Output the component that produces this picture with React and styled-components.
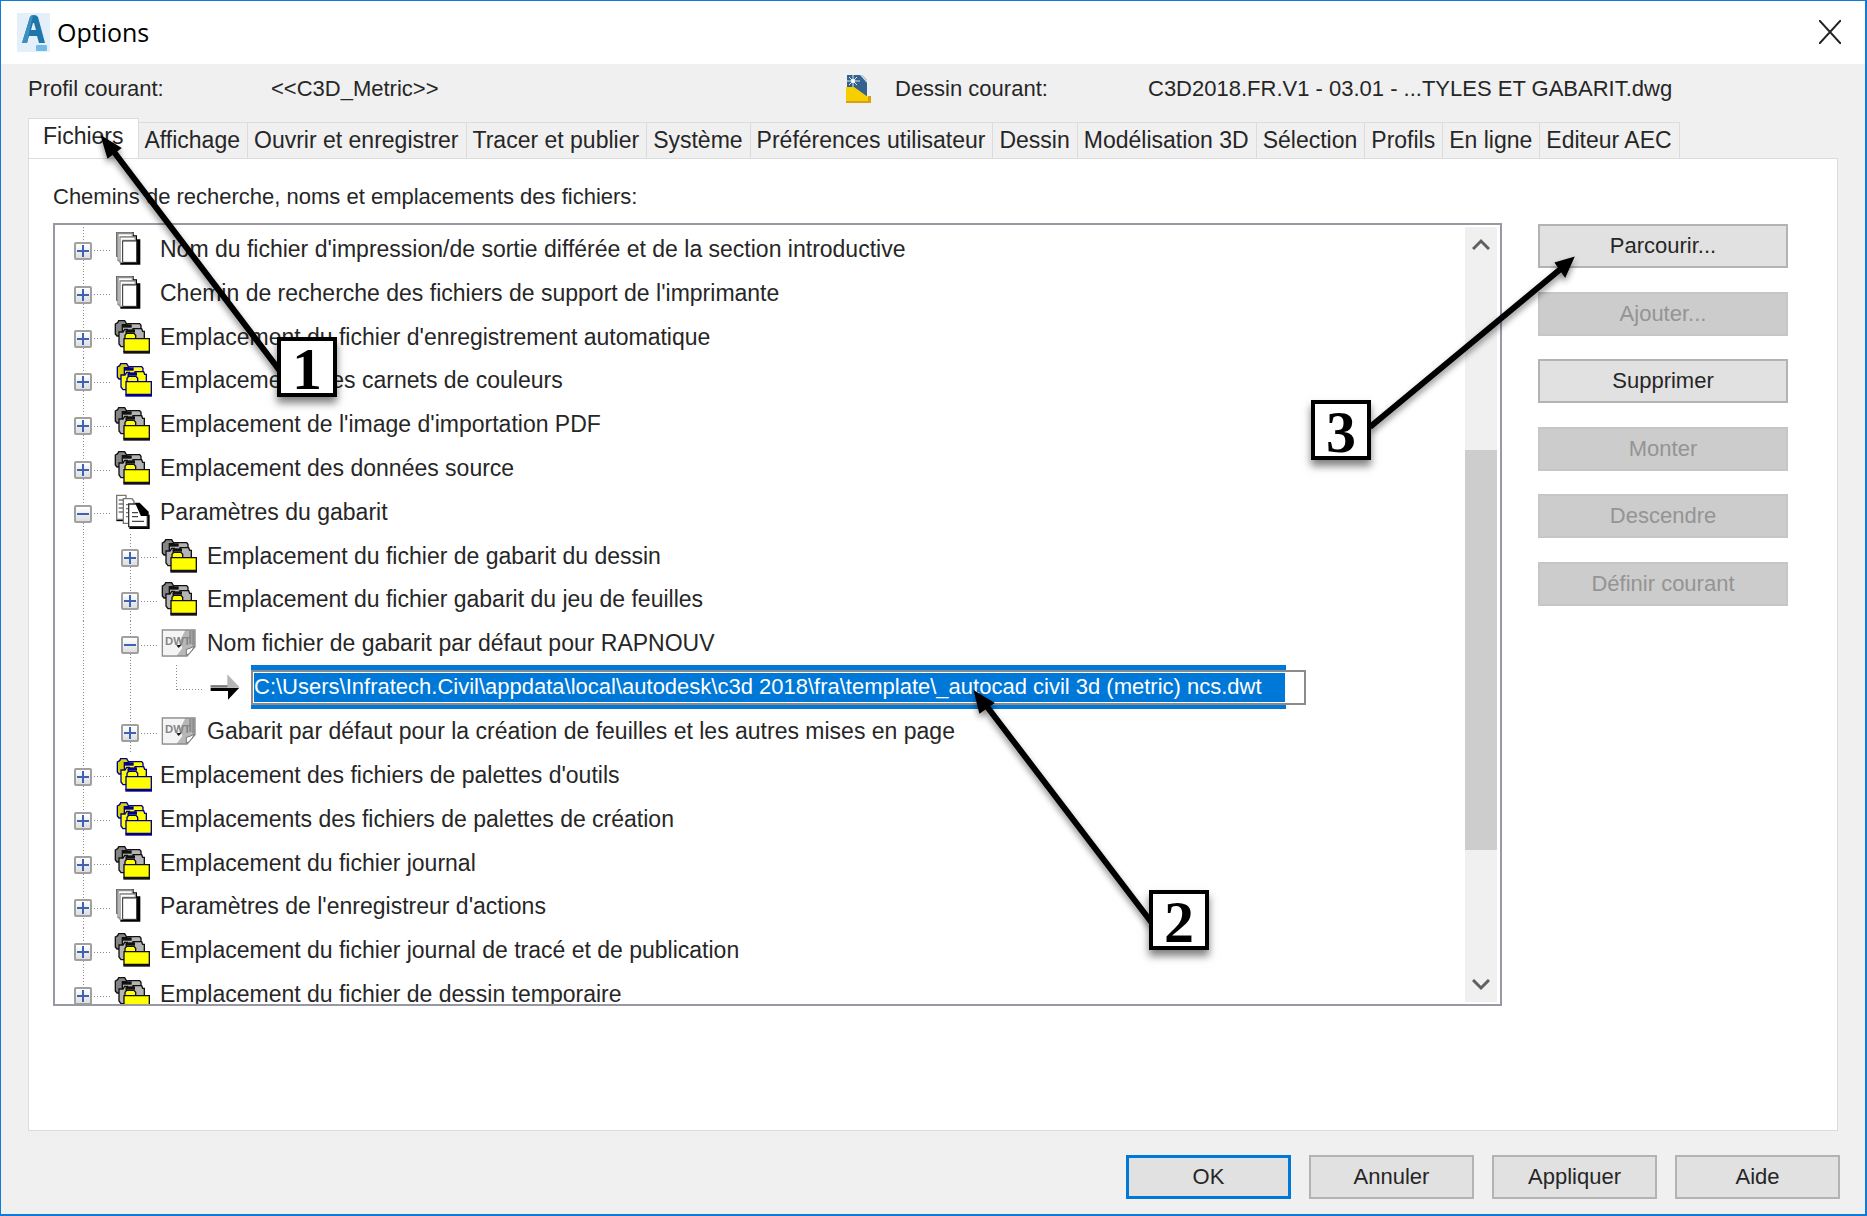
import React from 'react';
import styled, { createGlobalStyle } from 'styled-components';

const GlobalStyle = createGlobalStyle`
  *, *::before, *::after { box-sizing: border-box; }
  body { margin: 0; background: #f0f0f0; }
  button, input { font: inherit; }
`;

const Dialog = styled.main`
  position: relative;
  display: flex;
  flex-direction: column;
  min-height: 100vh;
  border: 1px solid #0f7ad8;
  border-bottom-width: 2px;
  border-right-width: 2px;
  background: #f0f0f0;
  color: #262626;
  font-family: "Liberation Sans", Arial, sans-serif;
  font-size: 22px;
  line-height: 26px;
`;

const TitleBar = styled.header`
  display: flex;
  align-items: center;
  height: 63px;
  padding: 0 24px 2px 16px;
  background: #fff;
`;

const Title = styled.h1`
  flex: 1;
  margin: 0 0 0 6px;
  color: #000;
  font: 400 25px/34px "Open Sans", "Noto Sans", sans-serif;
`;

const CloseButton = styled.button`
  display: flex;
  padding: 0;
  border: 0;
  background: none;
`;

const Profile = styled.section`
  display: grid;
  grid-template-columns: 243px 574px 50px 253px 1fr;
  align-items: center;
  height: 54px;
  padding: 0 27px 4px;
  white-space: nowrap;
`;

const Tabs = styled.nav`
  display: flex;
  align-items: flex-end;
  height: 40px;
  padding-left: 27px;
  font-size: 23px;
`;

const Tab = styled.button`
  height: ${p => (p.$active ? 41 : 36)}px;
  margin-bottom: ${p => (p.$active ? -1 : 0)}px;
  padding: ${p => (p.$active ? '0 14px 7px' : '0 7px 2px 6px')};
  border: 1px solid #dcdcdc;
  border-left-width: ${p => (p.$active ? 1 : 0)}px;
  border-bottom-width: 0;
  background: ${p => (p.$active ? '#fff' : '#f0f0f0')};
  color: inherit;
  white-space: nowrap;
`;

const Panel = styled.section`
  flex: 1;
  margin: 0 27px;
  padding: 25px 49px 0 24px;
  border: 1px solid #dcdcdc;
  background: #fff;
`;

const Caption = styled.h2`
  margin: 0 0 13px;
  font-size: 22px;
  font-weight: 400;
  line-height: 26px;
`;

const Columns = styled.div`
  display: flex;
  align-items: flex-start;
  gap: 36px;
`;

const TreeBox = styled.div`
  flex: 1;
  display: flex;
  height: 783px;
  padding: 2px 3px 2px 0;
  border: 2px solid #979aa4;
  overflow: hidden;
`;

const Tree = styled.ul`
  flex: 1;
  display: grid;
  grid-template-rows: repeat(18, 1fr);
  height: 789px;
  margin: 0;
  padding: 0 0 0 19px;
  font-size: 23px;
  list-style: none;
`;

const dots = '#8a8a8a 0 1px, transparent 1px 3px';

const Row = styled.li`
  display: flex;
  align-items: center;
  padding-left: ${p => p.$level * 47}px;
  white-space: nowrap;
  background:
    repeating-linear-gradient(to bottom, ${dots}) ${p => (p.$level === 2 ? 102 : 9)}px 0 / 1px ${p => (p.$level === 2 ? '25px' : '100%')} no-repeat,
    repeating-linear-gradient(to bottom, ${dots}) ${p => (p.$level > 0 ? 56 : 9)}px 0 / 1px 100% no-repeat,
    repeating-linear-gradient(to bottom, ${dots}) 9px 0 / 1px 100% no-repeat;
`;

const Expander = styled.button`
  display: flex;
  width: 18px;
  height: 18px;
  margin-top: 4px;
  padding: 0;
  border: 2px solid #a0a0a0;
  border-radius: 2px;
  background: linear-gradient(#fff, #dedede);
`;

const Dash = styled.span`
  width: ${p => (p.$long ? 25 : 17)}px;
  height: 1px;
  margin-top: 4px;
  margin-left: ${p => (p.$long ? 9 : 2)}px;
  background: repeating-linear-gradient(to right, ${dots});
`;

const IconCell = styled.span`
  display: flex;
  flex: none;
  width: 46px;
  margin-left: ${p => (p.$wide ? 8 : 3)}px;
`;

const Selection = styled.span`
  display: flex;
  align-items: center;
  width: 1035px;
  height: 44px;
  margin-left: -5px;
  background: #0078d7;
  font-size: 22px;
`;

const PathInput = styled.input`
  flex: none;
  width: 1055px;
  height: 35px;
  padding: 0 1px;
  border: 2px solid #8b8b8b;
  outline: 0;
  box-shadow: inset 0 0 0 1px #fff;
  background: linear-gradient(#0078d7, #0078d7) 0 0 / 1032px 100% no-repeat #fff;
  color: #fff;
`;

const ScrollBar = styled.div`
  display: flex;
  flex-direction: column;
  width: 32px;
  height: 775px;
  background: #f0f0f0;
`;

const ScrollButton = styled.button`
  display: flex;
  align-items: center;
  justify-content: center;
  height: 34px;
  padding: 0;
  border: 0;
  background: none;
`;

const ScrollTrack = styled.div`
  flex: 1;
  padding-top: 189px;
`;

const ScrollThumb = styled.div`
  height: 400px;
  background: #cdcdcd;
`;

const Side = styled.div`
  display: flex;
  flex-direction: column;
  justify-content: space-between;
  width: 250px;
  height: 382px;
  margin-top: 1px;
`;

const PushButton = styled.button`
  width: ${p => (p.$footer ? '165px' : '100%')};
  height: 44px;
  padding: 0;
  border: 2px solid #b3b3b3;
  background: #e1e1e1;
  color: #262626;
  &:disabled { border-color: #c6c6c6; background: #ccc; color: #949494; }
  ${p => p.$primary && 'border: 3px solid #0078d7;'}
`;

const Footer = styled.footer`
  display: flex;
  justify-content: flex-end;
  gap: 18px;
  padding: 24px 25px 15px;
`;

const Callout = styled.div`
  position: absolute;
  left: ${p => p.$x}px;
  top: ${p => p.$y}px;
  width: 60px;
  height: 60px;
  border: 4px solid #000;
  background: #fff;
  box-shadow: 0 6px 8px rgba(0, 0, 0, .5);
  color: #000;
  font: 700 60px/56px "Liberation Serif", serif;
  text-align: center;
`;

const Arrows = styled.svg`
  position: absolute;
  left: 0;
  top: 0;
  pointer-events: none;
  filter: drop-shadow(0 4px 3px rgba(0, 0, 0, .45));
`;

function FolderIcon({ blue }) {
  const line = blue ? '#00008b' : '#111';
  const back = blue ? '#d8d400' : '#858585';
  const mid = blue ? '#ffff00' : '#b4b4b4';
  return (
    <svg width="38" height="36" viewBox="0 0 114 108" stroke={line} strokeWidth="4">
      <g transform={blue ? 'translate(7 3)' : 'translate(1 3)'}>
        <path d="M3 12l7-4 3-6h18l5 8v38H8l-5-6z" fill={back} />
        <path d="M24 14h12l4-3h36l4 5v20H24z" fill={mid} />
        <path d="M26 13h26v10H26z" fill={line} stroke="none" />
        <path d="M14 36h12l5-8h8v52H20l-6-8z" fill={mid} />
        <path d="M36 34h20v-8h26l3 8h5v22H36z" fill={mid} />
        <path d="M34 28h28v10H34z" fill={line} stroke="none" />
        <path d="M32 56V46l5-6h22l5 6v10z" fill="#ff0" />
        <path d="M29 56h76v38H29z" fill="#ff0" />
        <path d="M27 97h80" strokeWidth="8" />
      </g>
    </svg>
  );
}

function PagesIcon() {
  return (
    <svg width="34" height="36" viewBox="0 0 102 108">
      <path d="M7 3h52v10h10v12h10v76H19V91H12V77H7z" fill="#000" />
      <path d="M8 4h48v6H12v66H8z" fill="#a0a0a0" />
      <path d="M12 8h43v10H20v70h-8z" fill="#fff" stroke="#909090" strokeWidth="4" />
      <path d="M18 18h46v10H26v66h-8z" fill="#fff" stroke="#909090" strokeWidth="4" />
      <path d="M26 30h42v64H26z" fill="#fff" stroke="#333" strokeWidth="3" />
    </svg>
  );
}

function DocsIcon() {
  return (
    <svg width="36" height="36" viewBox="0 0 108 108" fill="#fff" stroke="#777" strokeWidth="4">
      <path d="M7 78h24" stroke="#000" strokeWidth="7" />
      <path d="M8 4h28v72H8z" />
      <path d="M14 18h16M14 30h16M14 42h16M14 54h16" />
      <path d="M28 14h26l6 8v66H28z" />
      <path d="M36 32h14M36 44h10M36 56h10M36 68h10" />
      <path d="M46 101h57V62" fill="none" stroke="#000" strokeWidth="8" />
      <path d="M44 30h26l30 30v38H44z" stroke="#333" />
      <path d="M66 28h10l26 26v10H82z" fill="#000" stroke="#000" />
      <path d="M54 56h18M54 68h18M54 82h36" stroke="#444" />
    </svg>
  );
}

function TemplateIcon() {
  return (
    <svg width="36" height="30" viewBox="0 0 108 90">
      <path d="M4 6h98v50L78 84H4z" fill="#b8b8b8" stroke="#8c8c8c" strokeWidth="4" />
      <path d="M6 8h66L56 40l8 20-16 22H6z" fill="#f4f4f4" />
      <path d="M88 8v40M97 8v44" fill="none" stroke="#909090" strokeWidth="7" />
      <text x="12" y="52" fill="#858585" fontFamily="Liberation Sans, Arial, sans-serif" fontWeight="700" fontSize="34">DWT</text>
      <path d="M46 52l7 8 9-10z" fill="#111" />
      <path d="M76 82V64q12-2 24-10-8 20-24 28z" fill="#fff" stroke="#777" strokeWidth="3" />
    </svg>
  );
}

function ArrowIcon() {
  return (
    <svg width="30" height="28" viewBox="0 0 90 84">
      <path d="M2 36h50V4l36 38H2z" fill="#b5b5b5" />
      <path d="M2 44h86L54 80V54H2z" fill="#000" />
      <path d="M2 37h50v6H2z" fill="#777" />
    </svg>
  );
}

const AppLogo = () => (
  <svg width="34" height="40" viewBox="0 0 34 40">
    <rect width="33" height="39" x="0" y="1" fill="#e3f0fa" />
    <path d="M5 31L13 5q1-2 4-2t4 2l7 26h-6l-2-7h-8l-2 7z" fill="#1f76aa" />
    <path d="M5 31L13 5q1-2 3-2L10 31z" fill="#3c8fbf" />
    <path d="M14 18l2-7h1l2 7z" fill="#e3f0fa" />
    <rect x="19" y="33" width="11" height="6" rx="1" fill="#72bbe8" />
  </svg>
);

const DrawingIcon = () => (
  <svg width="27" height="30" viewBox="0 0 27 30">
    <path d="M2 1h15l5 5v21H2z" fill="#34618f" />
    <path d="M15 1h2l5 5v3z" fill="#c9d9e8" />
    <path d="M8 1v13M2 7h13M4 3l8 8M12 3l-8 8" stroke="#dcebf8" strokeWidth="1" />
    <circle cx="8" cy="7" r="2" fill="#fff" />
    <path d="M1 13h8l14 10h3v5H1z" fill="#f7cf00" />
    <path d="M1 27h25v2H1zM23 22h3v6h-3z" fill="#d9a010" />
  </svg>
);

const icons = {
  pages: <PagesIcon />,
  folder: <FolderIcon />,
  blue: <FolderIcon blue />,
  docs: <DocsIcon />,
  template: <TemplateIcon />,
};

const tabs = ['Fichiers', 'Affichage', 'Ouvrir et enregistrer', 'Tracer et publier', 'Système', 'Préférences utilisateur',
  'Dessin', 'Modélisation 3D', 'Sélection', 'Profils', 'En ligne', 'Editeur AEC'];

const rows = [
  [0, 'pages', "Nom du fichier d'impression/de sortie différée et de la section introductive"],
  [0, 'pages', "Chemin de recherche des fichiers de support de l'imprimante"],
  [0, 'folder', "Emplacement du fichier d'enregistrement automatique"],
  [0, 'blue', 'Emplacements des carnets de couleurs'],
  [0, 'folder', "Emplacement de l'image d'importation PDF"],
  [0, 'folder', 'Emplacement des données source'],
  [0, 'docs', 'Paramètres du gabarit', true],
  [1, 'folder', 'Emplacement du fichier de gabarit du dessin'],
  [1, 'folder', 'Emplacement du fichier gabarit du jeu de feuilles'],
  [1, 'template', 'Nom fichier de gabarit par défaut pour RAPNOUV', true],
  [2, 'arrow', 'C:\\Users\\Infratech.Civil\\appdata\\local\\autodesk\\c3d 2018\\fra\\template\\_autocad civil 3d (metric) ncs.dwt'],
  [1, 'template', 'Gabarit par défaut pour la création de feuilles et les autres mises en page'],
  [0, 'blue', "Emplacement des fichiers de palettes d'outils"],
  [0, 'blue', 'Emplacements des fichiers de palettes de création'],
  [0, 'folder', 'Emplacement du fichier journal'],
  [0, 'pages', "Paramètres de l'enregistreur d'actions"],
  [0, 'folder', 'Emplacement du fichier journal de tracé et de publication'],
  [0, 'folder', 'Emplacement du fichier de dessin temporaire'],
];

function TreeRow({ level, icon, label, open }) {
  if (level === 2) {
    return (
      <Row $level={level}>
        <Dash $long />
        <IconCell $wide><ArrowIcon /></IconCell>
        <Selection><PathInput aria-label="Chemin du gabarit" defaultValue={label} /></Selection>
      </Row>
    );
  }
  return (
    <Row $level={level}>
      <Expander aria-label={label} aria-expanded={!!open}>
        <svg width="14" height="14" stroke="#3f62b5" strokeWidth="2">
          <path d={open ? 'M1 7h12' : 'M1 7h12M7 1v12'} />
        </svg>
      </Expander>
      <Dash />
      <IconCell>{icons[icon]}</IconCell>
      <span>{label}</span>
    </Row>
  );
}

const sideButtons = [['Parcourir...'], ['Ajouter...', true], ['Supprimer'], ['Monter', true], ['Descendre', true], ['Définir courant', true]];

export default function App() {
  return (
    <Dialog>
      <GlobalStyle />
      <TitleBar>
        <AppLogo />
        <Title>Options</Title>
        <CloseButton aria-label="Fermer">
          <svg width="22" height="24" stroke="#222" strokeWidth="2"><path d="M0 0l22 24M22 0L0 24" /></svg>
        </CloseButton>
      </TitleBar>
      <Profile>
        <span>Profil courant:</span>
        <span>&lt;&lt;C3D_Metric&gt;&gt;</span>
        <DrawingIcon />
        <span>Dessin courant:</span>
        <span>C3D2018.FR.V1 - 03.01 - ...TYLES ET GABARIT.dwg</span>
      </Profile>
      <Tabs>
        {tabs.map((t, i) => <Tab key={t} $active={i === 0}>{t}</Tab>)}
      </Tabs>
      <Panel>
        <Caption>Chemins de recherche, noms et emplacements des fichiers:</Caption>
        <Columns>
          <TreeBox>
            <Tree>
              {rows.map(([level, icon, label, open]) => (
                <TreeRow key={label} level={level} icon={icon} label={label} open={open} />
              ))}
            </Tree>
            <ScrollBar>
              <ScrollButton aria-label="Défiler vers le haut">
                <svg width="18" height="12" fill="none" stroke="#606060" strokeWidth="3"><path d="M1 11l8-8 8 8" /></svg>
              </ScrollButton>
              <ScrollTrack><ScrollThumb /></ScrollTrack>
              <ScrollButton aria-label="Défiler vers le bas">
                <svg width="18" height="12" fill="none" stroke="#606060" strokeWidth="3"><path d="M1 1l8 8 8-8" /></svg>
              </ScrollButton>
            </ScrollBar>
          </TreeBox>
          <Side>
            {sideButtons.map(([t, off]) => <PushButton key={t} disabled={off}>{t}</PushButton>)}
          </Side>
        </Columns>
      </Panel>
      <Footer>
        <PushButton $footer $primary>OK</PushButton>
        <PushButton $footer>Annuler</PushButton>
        <PushButton $footer>Appliquer</PushButton>
        <PushButton $footer>Aide</PushButton>
      </Footer>
      <Arrows width="1600" height="960" aria-hidden="true">
        <g stroke="#000" strokeWidth="6">
          <path d="M279 370L110 147M1151 922L984 703M1369 426L1562 266" />
        </g>
        <path d="M101 136l18 11-12 9zM974 691l18 11-13 9zM1572 257l-8 18-9-13z" stroke="#000" strokeWidth="2" />
      </Arrows>
      <Callout $x={276} $y={336}>1</Callout>
      <Callout $x={1148} $y={889}>2</Callout>
      <Callout $x={1310} $y={399}>3</Callout>
    </Dialog>
  );
}
